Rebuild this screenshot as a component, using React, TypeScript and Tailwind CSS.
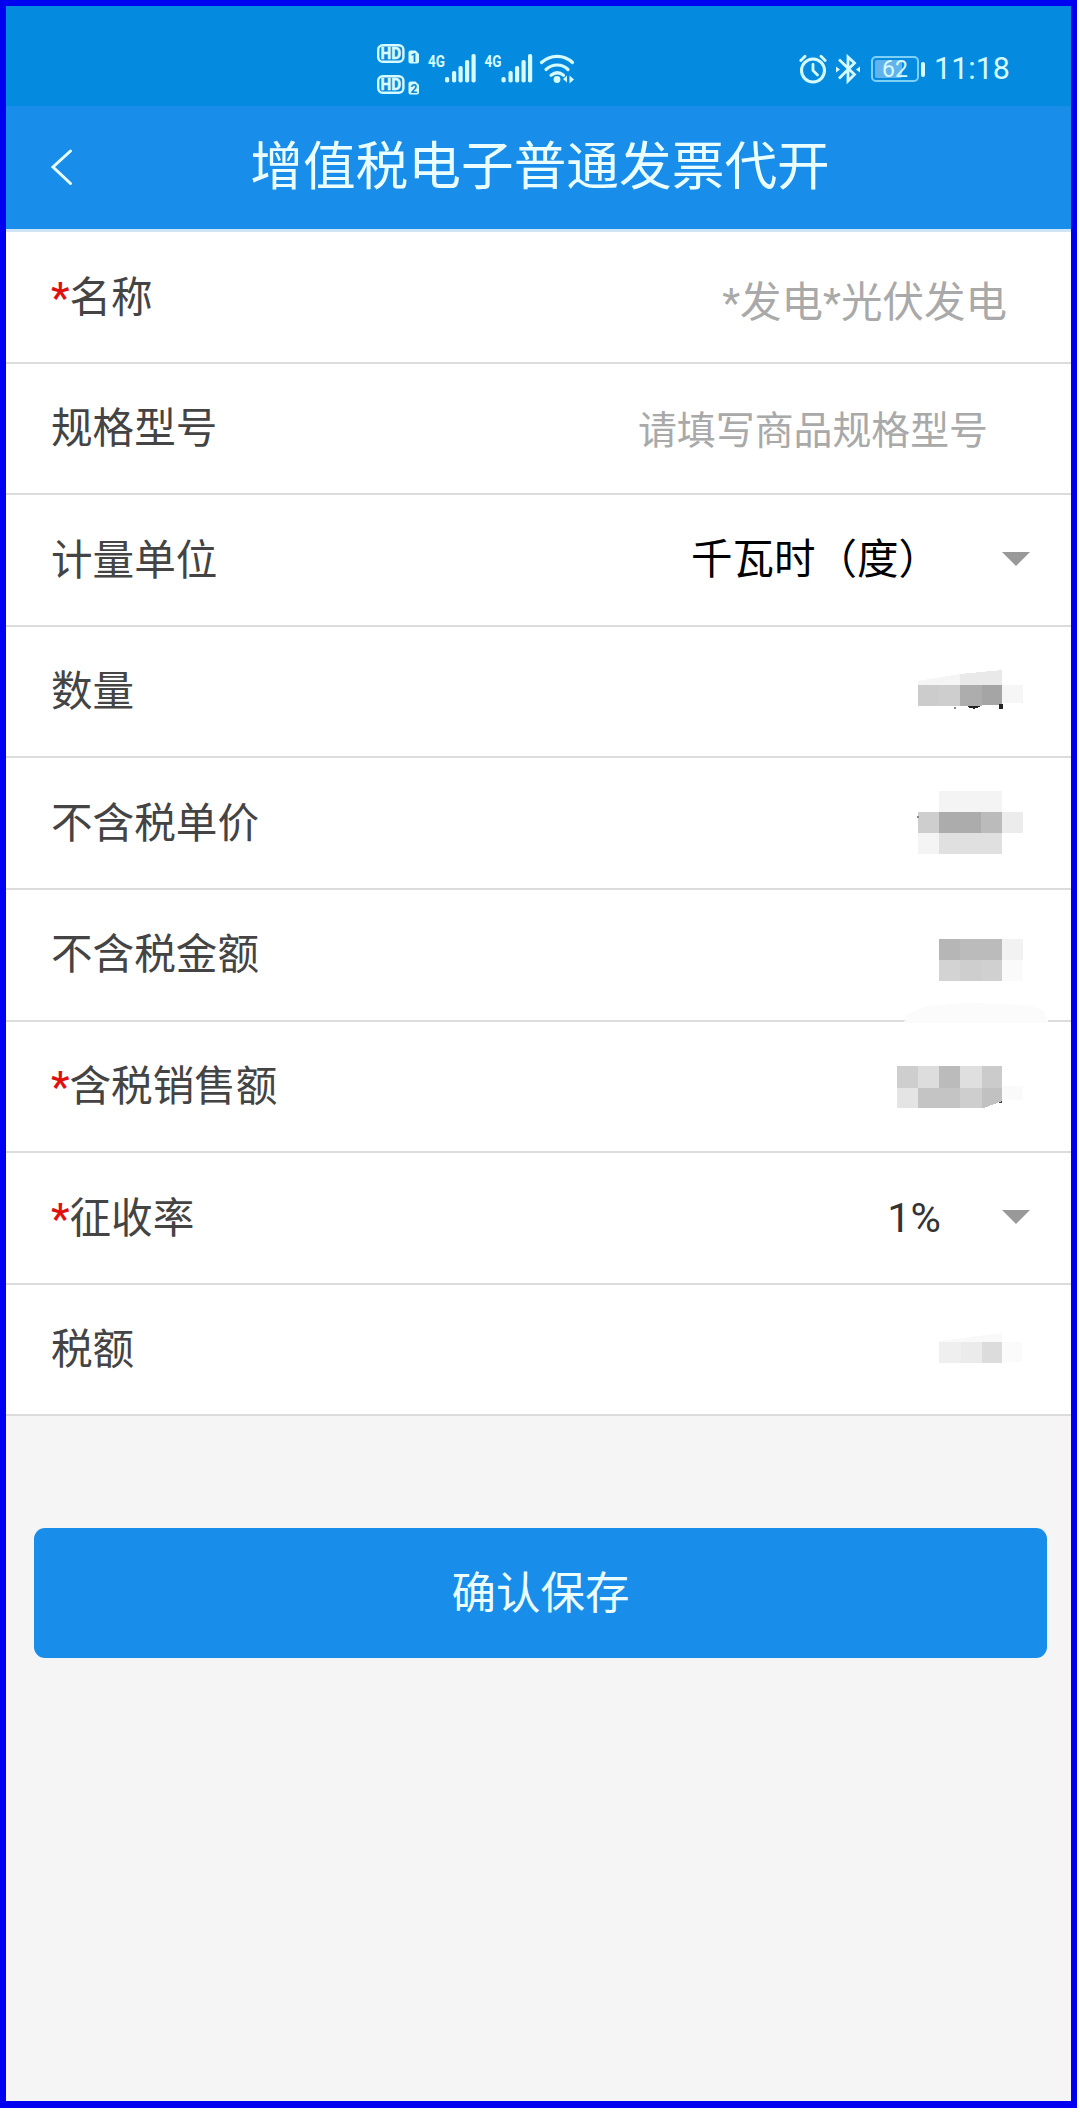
import { ReactNode } from 'react'

type Cell = [x: number, y: number, w: number, h: number, fill: string]

type Field = {
    label: string
    required?: boolean
    value: ReactNode
}

const SIGNAL_BARS = [
    [0, 23], [7, 17], [13.5, 12], [20, 6], [26.5, 0],
]

function Signal({ x }: { x: number }) {
    return (
        <g transform={`translate(${x} 10)`}>
            <text x="-17" y="13" fontSize="17" fontWeight="700" textLength="17" lengthAdjust="spacingAndGlyphs">4G</text>
            {SIGNAL_BARS.map(([left, top]) => (
                <rect key={left} x={left} y={top} width="4.2" height={28.5 - top} rx="1.8" />
            ))}
        </g>
    )
}

function HdBadge({ y, sim }: { y: number, sim: string }) {
    return (
        <g transform={`translate(0 ${y})`}>
            <rect x="1.2" y="1.2" width="25.2" height="16.6" rx="4.5" fill="none" stroke="#d6fbff" strokeWidth="2.4" />
            <text x="3.5" y="15.4" fontSize="16.5" fontWeight="700" textLength="20.5" lengthAdjust="spacingAndGlyphs" stroke="#d6fbff" strokeWidth="0.5">HD</text>
            <path d="M31.5 8.5a2 2 0 0 1 2-2h5l3.5 3.5v7.5a2 2 0 0 1-2 2h-6.500a2 2 0 0 1-2-2z" />
            <text x="33.5" y="17.500" fontSize="12" fontWeight="700" fill="#0a86d3">{sim}</text>
        </g>
    )
}

function NetworkIcons() {
    return (
        <svg width="200" height="54" viewBox="0 0 200 54" fill="#d6fbff" className="font-[Roboto]">
            <HdBadge y={0} sim="1" />
            <HdBadge y={31} sim="2" />
            <Signal x={68} />
            <Signal x={124.5} />
            <g fill="none" stroke="#d6fbff" strokeWidth="3.2" strokeLinecap="round">
                <path d="M164.5 18.5c9-8.3 22.500-8.3 31 0" />
                <path d="M169 25.5c6.5-6 16-6 22 0" />
                <path d="M174 31.3c4-3.200 8.7-3.200 12.500 0" />
            </g>
            <circle cx="180" cy="35.5" r="3.4" />
            <path d="M190 31.5v7l-4-3.5zM192.500 31.5v8l4.5-4z" />
        </svg>
    )
}

function AlarmIcon() {
    return (
        <svg width="28" height="30" viewBox="0 0 28 30" fill="none" stroke="#d6fbff" strokeWidth="3" strokeLinecap="round">
            <circle cx="14" cy="16.5" r="11.5" />
            <path d="M14 10.5v6l4.5 4.5" strokeWidth="2.8" />
            <path d="M1.8 6.500l4.2-4.300M26.2 6.500L22 2.200" strokeWidth="2.8" />
        </svg>
    )
}

function BluetoothIcon() {
    return (
        <svg width="24" height="30" viewBox="0 0 24 30" fill="none" stroke="#d6fbff" strokeWidth="2.8">
            <path d="M3 5.5l15.500 15L12 27V3l6.500 6L3 24.500" />
            <path d="M0 12.500l4 3-4 3zM24 12.500l-4 3 4 3z" fill="#d6fbff" stroke="none" />
        </svg>
    )
}

function Battery() {
    return (
        <div className="flex items-center gap-[2px]">
            <div className="relative flex h-[26px] w-12 items-center justify-center rounded-[5px] border-2 border-[#7fd0f6]">
                <div className="absolute top-[2px] bottom-[2px] left-[2px] w-[27px] rounded-[2px] bg-[#62b2ec]" />
                <span className="relative text-[23px] leading-none text-[#d6fbff]">62</span>
            </div>
            <div className="h-[15px] w-[4px] rounded-[2px] bg-[#d6fbff]" />
        </div>
    )
}

function Caret() {
    return (
        <svg width="28" height="14" viewBox="0 0 28 14" className="mr-[41px] mb-[2px]">
            <path d="M0 0h28L14 14z" fill="#999" />
        </svg>
    )
}

// Masked amounts: the drawing spans the full row height so cells can spill over the divider.
function Mosaic({ cells, children }: { cells: Cell[], children?: ReactNode }) {
    return (
        <svg width="160" height="130" viewBox="0 0 160 130" shapeRendering="crispEdges" className="mr-[31px] overflow-visible">
            {cells.map(([x, y, w, h, fill]) => (
                <rect key={`${x}-${y}`} x={x} y={y} width={w} height={h} fill={fill} />
            ))}
            {children}
        </svg>
    )
}

const fields: Field[] = [
    {
        label: '名称',
        required: true,
        value: <span className="mt-[11px] mr-[64px] text-[41.5px] text-[#a9a9a9]">*发电*光伏发电</span>,
    },
    {
        label: '规格型号',
        value: <span className="mt-[6px] mr-[83px] text-[38.9px] text-[#a9a9a9]">请填写商品规格型号</span>,
    },
    {
        label: '计量单位',
        value: (
            <>
                <span className="mr-[62px] text-[41.5px] text-black">千瓦时（度）</span>
                <Caret />
            </>
        ),
    },
    {
        label: '数量',
        value: (
            <Mosaic
                cells={[
                    [38, 58, 21, 21, '#cccccc'],
                    [59, 58, 21, 21, '#cecece'],
                    [80, 58, 22, 21, '#adadad'],
                    [102, 58, 20, 20, '#a5a5a5'],
                    [122, 58, 21, 18, '#f6f6f6'],
                    [119, 77, 4, 5, '#222222'],
                    [74, 80, 2, 2, '#888888'],
                ]}
            >
                <path d="M38 54l42-7v11H38z" fill="#f5f5f5" />
                <path d="M80 47l42-4v15H80z" fill="#e9e9e9" />
                <path d="M87 79q6.5 5.5 14 0z" fill="#222" />
            </Mosaic>
        ),
    },
    {
        label: '不含税单价',
        value: (
            <Mosaic
                cells={[
                    [59, 33, 63, 21, '#f4f4f4'],
                    [38, 54, 21, 21, '#cecece'],
                    [59, 54, 42, 21, '#acacac'],
                    [101, 54, 21, 21, '#bbbbbb'],
                    [122, 54, 21, 21, '#ececec'],
                    [38, 75, 21, 21, '#f4f4f4'],
                    [59, 75, 63, 21, '#e0e0e0'],
                    [37, 58, 2, 2, '#888888'],
                ]}
            />
        ),
    },
    {
        label: '不含税金额',
        value: (
            <Mosaic
                cells={[
                    [59, 49, 21, 21, '#b6b6b6'],
                    [80, 49, 42, 21, '#bbbbbb'],
                    [122, 49, 21, 21, '#f2f2f2'],
                    [59, 70, 21, 21, '#d3d3d3'],
                    [80, 70, 21, 21, '#cecece'],
                    [101, 70, 21, 21, '#d0d0d0'],
                    [122, 70, 21, 21, '#fafafa'],
                ]}
            >
                <path d="M24 133l3-9 20-8 40-3 60 2 16 5 6 13z" fill="#fbfbfb" />
            </Mosaic>
        ),
    },
    {
        label: '含税销售额',
        required: true,
        value: (
            <Mosaic
                cells={[
                    [17, 45, 21, 22, '#cecece'],
                    [38, 45, 21, 22, '#dddddd'],
                    [59, 45, 21, 22, '#bbbbbb'],
                    [80, 45, 22, 22, '#dfdfdf'],
                    [102, 45, 20, 22, '#cbcbcb'],
                    [17, 67, 21, 20, '#e4e4e4'],
                    [38, 67, 42, 20, '#c4c4c4'],
                    [80, 67, 22, 20, '#cecece'],
                    [122, 65, 21, 14, '#fafafa'],
                    [119, 80, 3, 2, '#444444'],
                ]}
            >
                <path d="M102 67h20v13l-18 7h-2z" fill="#c1c1c1" />
            </Mosaic>
        ),
    },
    {
        label: '征收率',
        required: true,
        value: (
            <>
                <span className="mr-[61px] text-[41.5px] text-[#333]">1%</span>
                <Caret />
            </>
        ),
    },
    {
        label: '税额',
        value: (
            <Mosaic
                cells={[
                    [59, 57, 22, 21, '#efefef'],
                    [81, 57, 21, 21, '#ebebeb'],
                    [102, 57, 20, 21, '#dcdcdc'],
                    [122, 57, 20, 20, '#fbfbfb'],
                ]}
            >
                <path d="M59 56l63-8v9H59z" fill="#f9f9f9" />
            </Mosaic>
        ),
    },
]

export default function App() {
    return (
        <div className="h-[2112px] w-[1080px] bg-white pr-[3px] pb-[4px] font-[Roboto,'Noto_Sans_CJK_SC',sans-serif]">
            <div className="flex h-full flex-col border-[6px] border-b-[7px] border-[#0000f0] bg-[#f5f5f5]">

                <div className="flex h-[100px] shrink-0 items-start justify-between bg-[#048be0] pr-[61px] pl-[371px]">
                    <div className="pt-[38px]"><NetworkIcons /></div>
                    <div className="mt-[48px] flex h-[30px] items-center">
                        <AlarmIcon />
                        <div className="ml-[9px]"><BluetoothIcon /></div>
                        <div className="ml-[11px]"><Battery /></div>
                        <span className="ml-[9px] text-[30.5px] leading-none text-[#d6fbff]">11:18</span>
                    </div>
                </div>

                <header className="flex h-[123px] shrink-0 items-center bg-[#188de9]">
                    <svg width="24" height="38" viewBox="0 0 24 38" fill="none" stroke="#eafdff" strokeWidth="3" strokeLinecap="round" className="mb-[2px] ml-[44px]">
                        <path d="M20.5 3L3 19l17.5 16.5" />
                    </svg>
                    <h1 className="mr-[65px] flex-1 text-center text-[52.7px] leading-none text-[#eafdff]">增值税电子普通发票代开</h1>
                </header>

                <div className="border-t-[3px] border-[#cfe5f6] bg-white">
                    {fields.map(({ label, required, value }) => (
                        <div key={label} className="flex h-[131.6px] items-center border-b-2 border-[#dcdcdc] leading-none">
                            <div className="mt-[1px] ml-[45px] flex-1 text-[41.6px] text-[#444]">
                                {required && <span className="font-medium text-[#e01010]">*</span>}
                                {label}
                            </div>
                            {value}
                        </div>
                    ))}
                </div>

                <button className="mt-[112px] mr-[24px] ml-[28px] h-[130px] shrink-0 rounded-[11px] bg-[#188de9] pt-[2px] text-[44.5px] text-[#eafdff]">
                    确认保存
                </button>

            </div>
        </div>
    )
}
